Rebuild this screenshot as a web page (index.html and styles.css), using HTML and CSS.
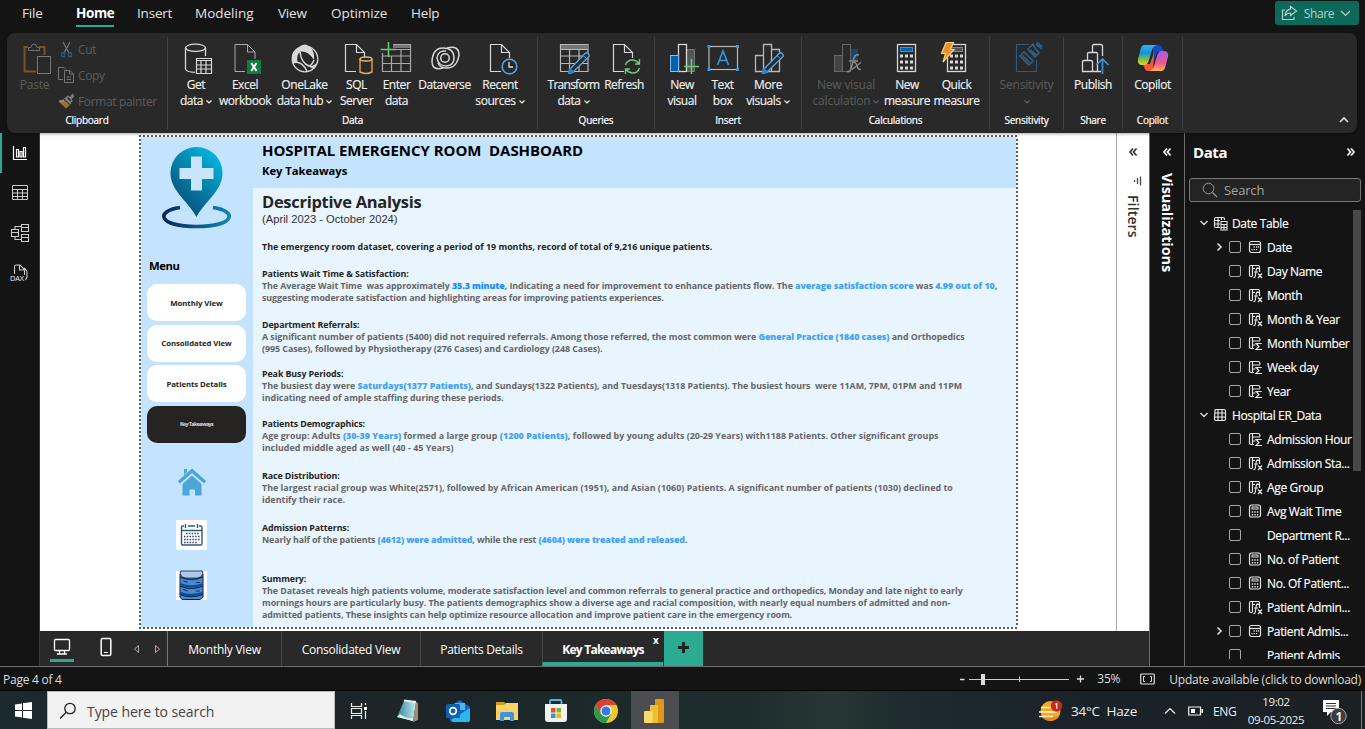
FILE: index.html
```html
<!DOCTYPE html>
<html lang="en">
<head>
<meta charset="utf-8">
<title>Hospital Emergency Room Dashboard</title>
<link rel="stylesheet" href="styles.css">
</head>
<body>
<svg class="defs" width="0" height="0">
  <symbol id="page" viewBox="0 0 32 32"><path d="M16 29.500H5.500V2.500H16.500L24.500 10.500V16M16.500 2.500V10.500H24.500" fill="none" stroke="#d8d8d8" stroke-width="1.200"/></symbol>
  <symbol id="pencil" viewBox="0 0 32 32"><path d="M27 11.500Q29 10 30.500 12T30.500 15L15 30L10.500 32L12 27Z" fill="#292929" stroke="#5aa7e0" stroke-width="1.400"/><path d="M12 27.500L15 30L11 31.500Z" fill="#0f6cbd" stroke="#2f86d1" stroke-width="2"/><path d="M25 13.500l3.500 3" stroke="#5aa7e0"/></symbol>
  <symbol id="chev" viewBox="0 0 6 4"><path d="M.500 .500L3 3L5.500 .500" fill="none" stroke="currentColor" stroke-width="1.200"/></symbol>
  <symbol id="down" viewBox="0 0 10 10"><path d="M1.500 3L5 6.500L8.500 3" fill="none" stroke="#ddd" stroke-width="1.400"/></symbol>
  <symbol id="right" viewBox="0 0 10 10"><path d="M3.500 1.500L7 5L3.500 8.500" fill="none" stroke="#ddd" stroke-width="1.600"/></symbol>
  <symbol id="dbl" viewBox="0 0 10 10"><path d="M5 1.500L2 5L5 8.500M8.500 1.500L5.500 5L8.500 8.500" fill="none" stroke="currentColor" stroke-width="1.700"/></symbol>
  <symbol id="grid" viewBox="0 0 15 15"><path d="M2 2.500Q2 1.500 3 1.500H11Q12.500 1.500 12.500 3V11Q12.500 12.500 11 12.500H3Q1.500 12.500 1.500 11ZM5 1.500V12.500M9 1.500V12.500M1.500 5H12.500M1.500 9H12.500" fill="none" stroke="#e6e6e6" stroke-width="1.200"/></symbol>
  <symbol id="gridcalc" viewBox="0 0 15 15"><path d="M7 11.500H3Q1.500 11.500 1.500 10V3Q1.500 1.500 3 1.500H10Q11.500 1.500 11.500 3V4M5 1.500V11.500M8.500 1.500V4M1.500 4.500H7M1.500 8H7" fill="none" stroke="#e6e6e6" stroke-width="1.200"/><path d="M8 5.500H14V14H8ZM8 8.500H14M8 11.500H14M11 8.500V14" fill="none" stroke="#e6e6e6" stroke-width="1.100"/></symbol>
  <symbol id="cal" viewBox="0 0 15 15"><rect x="1.500" y="1.500" width="11" height="11" rx="2" fill="none" stroke="#e6e6e6" stroke-width="1.200"/><path d="M1.500 4.500H12.500" stroke="#e6e6e6" stroke-width="1.200"/><path d="M5.500 7h1.200M8 7h1.200M10 7h1M3.500 9.700h1.200M5.700 9.700h1.200M8 9.700h1.200" stroke="#e6e6e6" stroke-width="1.300"/></symbol>
  <symbol id="calc" viewBox="0 0 15 15"><rect x="1.500" y="1" width="11" height="12" rx="1.800" fill="none" stroke="#e6e6e6" stroke-width="1.200"/><rect x="4" y="3" width="6" height="2" fill="none" stroke="#e6e6e6"/><path d="M3.700 8H5.200M6.300 8H7.700M8.800 8H10.300M3.700 10.700H5.200M6.300 10.700H7.700M8.800 10.700H10.300" stroke="#e6e6e6" stroke-width="1.500"/></symbol>
  <symbol id="fx" viewBox="0 0 15 15"><path d="M4 12.500H3Q1.500 12.500 1.500 11V3Q1.500 1.500 3 1.500H10.500Q11.500 1.500 11.500 3V8M4.500 1.500V12.500M4.500 4.500H7M9 4.500H11.500" fill="none" stroke="#e6e6e6" stroke-width="1.200"/><path d="M10.500 4Q8.500 3.500 8.200 6L7.300 12Q7 14 5.500 13.500M6.200 8H10M10 9.500L14 14M14 9.500L10 14" fill="none" stroke="#e6e6e6" stroke-width="1.200"/></symbol>
  <symbol id="sum" viewBox="0 0 15 15"><path d="M6 12.500H3Q1.500 12.500 1.500 11V3Q1.500 1.500 3 1.500H10Q12 1.500 12 4.500M4.500 1.500V12.500M4.500 5H12M4.500 9H7.500" fill="none" stroke="#e6e6e6" stroke-width="1.200"/><path d="M13.700 7.500H8L11 10.500L8 13.500H14" fill="none" stroke="#e6e6e6" stroke-width="1.200"/></symbol>
</svg>

<nav class="menubar">
  <span class="m-file">File</span><span class="m-home">Home</span><span class="m-insert">Insert</span><span class="m-model">Modeling</span><span class="m-view">View</span><span class="m-opt">Optimize</span><span>Help</span>
  <button class="share"><svg width="17" height="17" viewBox="0 0 17 17"><path d="M4 5H1.500V14.500H13V12M9.500 1.500L15.500 6L9.500 10.500V8Q6 8 4 11Q4.500 5 9.500 4.200Z" fill="none" stroke="#b5cfc9" stroke-width="1.200"/></svg><span>Share</span><svg width="11" height="7" viewBox="0 0 11 7"><path d="M1 1L5.500 5.500L10 1" fill="none" stroke="#b5cfc9" stroke-width="1.200"/></svg></button>
</nav>

<section class="ribbon">
  <div class="group g-clip">
    <div class="buttons">
      <div class="btn b-paste off"><svg width="32" height="32" viewBox="0 0 32 32"><path d="M9 5H5.500V29.500H17M20 5H25.500V13" fill="none" stroke="#755426" stroke-width="2"/><path d="M9.500 8.500V5.500H12Q12.500 2 15 2T18 5.500H20.500V8.500Z" fill="#292929" stroke="#6f6f6f"/><rect x="18.500" y="14.500" width="13" height="17" fill="#292929" stroke="#777"/></svg><span>Paste</span></div>
      <div class="cliplist off">
        <div><svg width="17" height="17" viewBox="0 0 17 17"><path d="M5 1L11 12M12 1L6 12" stroke="#777" stroke-width="1.300"/><rect x="3.500" y="12" width="3" height="3.500" fill="none" stroke="#285a7a" stroke-width="1.400"/><rect x="10.500" y="12" width="3" height="3.500" fill="none" stroke="#285a7a" stroke-width="1.400"/></svg><span>Cut</span></div>
        <div><svg width="17" height="17" viewBox="0 0 17 17"><path d="M5 12.500H.500V.500H6L8 2.500M6.500 3.500H12L15.500 7V15.500H6.500ZM11.500 3.500V7H15.500M8.500 10H13M8.500 12.500H13" fill="none" stroke="#757575"/></svg><span>Copy</span></div>
        <div><svg width="17" height="17" viewBox="0 0 17 17"><path d="M5 6L12 12L8 15.500L1 9Z" fill="#9a7038"/><path d="M6.500 5L13 11M8 5L10 3L12 5L14.500 1.500L15.500 3L13 6L14 8L12 9.500Z" fill="#292929" stroke="#888" stroke-width="1.200"/><path d="M1 8L6 8" stroke="#aaa"/></svg><span>Format painter</span></div>
      </div>
    </div>
    <div class="label">Clipboard</div>
  </div>
  <div class="group g-data">
    <div class="buttons">
      <div class="btn b1"><svg width="32" height="32" viewBox="0 0 32 32"><path d="M5.500 6V27Q6 30 15 30.300M25.500 6V14" fill="none" stroke="#d8d8d8" stroke-width="1.300"/><ellipse cx="15.500" cy="5.800" rx="10" ry="3.600" fill="none" stroke="#d8d8d8" stroke-width="1.300"/><path d="M16.500 16.500H31.500V31.500H16.500ZM16.500 18.500H31.500M16.500 23H31.500M16.500 27H31.500M21 18V31.500M26 18V31.500" fill="#292929" stroke="#d8d8d8" stroke-width="1.200"/></svg><span>Get</span><span>data<svg class="cv"><use href="#chev"/></svg></span></div>
      <div class="btn b2"><svg width="32" height="32" viewBox="0 0 32 32"><path d="M16 29.500H6V2.500H18.500L26 10V17M18.500 2.500V10H26" fill="none" stroke="#a8a8a8"/><rect x="18" y="18" width="14" height="14" fill="#107c41"/><path d="M22.300 21L27.500 29M27.500 21L22.300 29" stroke="#fff" stroke-width="2"/></svg><span>Excel</span><span>workbook</span></div>
      <div class="btn b3"><svg width="32" height="32" viewBox="0 0 32 32"><circle cx="16" cy="17" r="12.800" fill="none" stroke="#d8d8d8" stroke-width="1.300"/><path d="M10 5.500Q15 0 20.500 4.500Q26 9 25 18Q20 9 11.500 9.500Q7 13 8.500 21L4 21Q1 12 7 7Z" fill="#d8d8d8"/><path d="M11 9.500Q12 21 20 24Q23 23 25 18M4 21Q12 18 18 29" fill="none" stroke="#d8d8d8" stroke-width="1.500"/><path d="M20 24Q26 24 28 20L26 26Q22 27 20 24Z" fill="#d8d8d8"/></svg><span>OneLake</span><span>data hub<svg class="cv"><use href="#chev"/></svg></span></div>
      <div class="btn b4"><svg width="32" height="32" viewBox="0 0 32 32"><use href="#page" x="-1"/><path d="M19 17V30Q25 33 31 30V17" fill="#292929" stroke="#e0a458" stroke-width="1.400"/><ellipse cx="25" cy="17" rx="6" ry="2" fill="#292929" stroke="#e9b878" stroke-width="1.400"/></svg><span>SQL</span><span>Server</span></div>
      <div class="btn b5"><svg width="32" height="32" viewBox="0 0 32 32"><path d="M1.500 11V29.500H29.500V2.500H12M1.500 14H29.500M1.500 21.500H29.500M10.500 14V29.500M20 7V29.500M12 7.500H29.500" fill="none" stroke="#a8a8a8" stroke-width="1.200"/><path d="M12 4.500H29" stroke="#777" stroke-width="3"/><path d="M7.500 0V15M-.500 7.500H15" stroke="#6ccb79" stroke-width="1.500"/></svg><span>Enter</span><span>data</span></div>
      <div class="btn b6"><svg width="32" height="32" viewBox="0 0 32 32"><g fill="none" stroke="#d8d8d8" stroke-width="1.500"><circle cx="16" cy="16" r="4.300"/><path d="M14 26Q3 29 3 19Q4 6 14 6Q25 6 25 16Q25 23 18 24Q9 24 8 16Q9 8 17 9"/><path d="M18 6Q30 3 30 13Q28 26 18 26Q11 26 9 21"/></g></svg><span>Dataverse</span></div>
      <div class="btn b7"><svg width="32" height="32" viewBox="0 0 32 32"><use href="#page" x="1"/><circle cx="25.500" cy="24.500" r="7.300" fill="#292929" stroke="#5aa7e0" stroke-width="1.500"/><path d="M25 20V25H29" fill="none" stroke="#ddd" stroke-width="1.300"/></svg><span>Recent</span><span>sources<svg class="cv"><use href="#chev"/></svg></span></div>
    </div>
    <div class="label">Data</div>
  </div>
  <div class="group g-query">
    <div class="buttons">
      <div class="btn b8"><svg width="32" height="32" viewBox="0 0 32 32"><path d="M2.500 2.500H30V29.500H2.500ZM2.500 14H30M2.500 21.500H30M11.500 7V29.500M21 7V29.500M2.500 7.500H30" fill="none" stroke="#b8b8b8" stroke-width="1.200"/><path d="M3 5H29.500" stroke="#777" stroke-width="4"/><use href="#pencil"/></svg><span class="tight">Transform</span><span>data<svg class="cv"><use href="#chev"/></svg></span></div>
      <div class="btn b9"><svg width="32" height="32" viewBox="0 0 32 32"><use href="#page"/><circle cx="24.500" cy="24.500" r="8" fill="#292929"/><path d="M17.500 23Q19 18 24.500 18Q28 18 31 21.500M31.500 17V22H27M31.500 26Q30 31 24.500 31Q21 31 18 27.500M17.500 32V27H22" fill="none" stroke="#6ccb79" stroke-width="1.400"/></svg><span>Refresh</span></div>
    </div>
    <div class="label">Queries</div>
  </div>
  <div class="group g-insert">
    <div class="buttons">
      <div class="btn b10"><svg width="32" height="32" viewBox="0 0 32 32"><rect x="20.500" y="7.500" width="8" height="22" fill="#555" stroke="#777"/><rect x="12.500" y="2.500" width="8" height="27" fill="#292929" stroke="#d8d8d8" stroke-width="1.300"/><rect x="4.500" y="13.500" width="8" height="16" fill="#0063b1" stroke="#83beec"/><path d="M25.500 17V32M18 24.500H33" stroke="#6ccb79" stroke-width="1.500"/></svg><span>New</span><span>visual</span></div>
      <div class="btn b11"><svg width="32" height="32" viewBox="0 0 32 32"><rect x="2" y="4.500" width="28.500" height="23" fill="none" stroke="#b8b8b8" stroke-width="1.200"/><path d="M.500 3H3.500V6H.500ZM29 3H32V6H29ZM.500 26H3.500V29H.500ZM29 26H32V29H29Z" fill="#3a96dd"/><path d="M10.500 23L16 9L21.500 23M12.500 18.500H19.500" fill="none" stroke="#3a96dd" stroke-width="1.600"/></svg><span>Text</span><span>box</span></div>
      <div class="btn b12"><svg width="32" height="32" viewBox="0 0 32 32"><path d="M3.500 13.500H11.500V29.500H3.500ZM11.500 2.500H19.500V29.500H11.500ZM19.500 7.500H27.500V29.500H19.500Z" fill="none" stroke="#b8b8b8" stroke-width="1.300"/><use href="#pencil"/></svg><span>More</span><span>visuals<svg class="cv"><use href="#chev"/></svg></span></div>
    </div>
    <div class="label">Insert</div>
  </div>
  <div class="group g-calc">
    <div class="buttons">
      <div class="btn b13 off"><svg width="32" height="32" viewBox="0 0 32 32"><rect x="20" y="7" width="8" height="12" fill="#1d4365"/><rect x="12.500" y="2.500" width="8" height="27" fill="#292929" stroke="#666"/><rect x="4.500" y="13.500" width="8" height="16" fill="#444" stroke="#666"/><path d="M29 13Q25 12 24 16L21 27Q20 30 17 29.500M19 19H28" fill="none" stroke="#888" stroke-width="1.600"/><path d="M23.500 20.500Q26 20 27 24T31 27.500M31 20.500L22 27.500" fill="none" stroke="#888" stroke-width="1.300"/></svg><span>New visual</span><span>calculation<svg class="cv"><use href="#chev"/></svg></span></div>
      <div class="btn b14"><svg width="32" height="32" viewBox="0 0 32 32"><rect x="6.500" y="2.500" width="18" height="27" fill="none" stroke="#d8d8d8" stroke-width="1.300"/><rect x="9.500" y="5.500" width="12" height="4" fill="#0063b1" stroke="#3a96dd"/><path d="M9 14H22M9 20H22M9 26H22" stroke="#d8d8d8" stroke-width="3" stroke-dasharray="3 2"/></svg><span>New</span><span>measure</span></div>
      <div class="btn b15"><svg width="32" height="32" viewBox="0 0 32 32"><rect x="6.500" y="2.500" width="18" height="27" fill="none" stroke="#d8d8d8" stroke-width="1.300"/><rect x="9.500" y="5.500" width="12" height="4" fill="#555" stroke="#888"/><path d="M9 14H22M9 20H22M9 26H22" stroke="#d8d8d8" stroke-width="3" stroke-dasharray="3 2"/><path d="M5 .500H12.500L9.500 7.500H13L2 20L4.500 11.500H.500Z" fill="#e8912d" stroke="#fbd17c" stroke-width="1.200"/></svg><span>Quick</span><span>measure</span></div>
    </div>
    <div class="label">Calculations</div>
  </div>
  <div class="group g-sens">
    <div class="buttons">
      <div class="btn b16 off"><svg width="32" height="32" viewBox="0 0 32 32"><path d="M18 2.500H5.500V29.500H25.500V18" fill="none" stroke="#295b80" stroke-width="1.200"/><path d="M9 14L13 10L22 19L18 23ZM11.500 13.500L18.500 20.500M17 7L22 2L24 6L28 11L24 15ZM19 8L25 13M25 2L31 7M26 0L31 5" fill="none" stroke="#315f82" stroke-width="1.700"/></svg><span>Sensitivity</span><span><svg class="cv solo"><use href="#chev"/></svg></span></div>
    </div>
    <div class="label">Sensitivity</div>
  </div>
  <div class="group g-share">
    <div class="buttons">
      <div class="btn b17"><svg width="32" height="32" viewBox="0 0 32 32"><path d="M5.500 29.500V20Q5.500 18.500 7 18.500H14Q15.500 18.500 15.500 20V29.500M10.500 18V11.500Q10.500 10.500 12 10.500H19Q20.500 10.500 20.500 12V29.500M15.500 10V4Q15.500 2.500 17 2.500H24Q25.500 2.500 25.500 4V14M5 29.500H24" fill="none" stroke="#d8d8d8" stroke-width="1.300"/><path d="M25.500 32V17M19.500 23L25.500 17L31.500 23" fill="none" stroke="#3a96dd" stroke-width="1.600"/></svg><span>Publish</span></div>
    </div>
    <div class="label">Share</div>
  </div>
  <div class="group g-copilot">
    <div class="buttons">
      <div class="btn b18"><svg width="32" height="32" viewBox="0 0 32 32"><defs><linearGradient id="c1" x1="0" y1="0" x2="0" y2="1"><stop offset="0" stop-color="#2fb5f4"/><stop offset=".4" stop-color="#1a93dd"/><stop offset=".7" stop-color="#6fbf50"/><stop offset="1" stop-color="#f3cf12"/></linearGradient><linearGradient id="c2" x1="0" y1="0" x2="0" y2="1"><stop offset="0" stop-color="#a35cf0"/><stop offset=".6" stop-color="#f0588e"/><stop offset="1" stop-color="#ffb04f"/></linearGradient></defs><path d="M16 3H21Q24 3 25 6L26.500 10H20L16 22Z" fill="#1749c9"/><path d="M16 29H11Q8 29 7.500 26L6 22H13L17 10Z" fill="#f05a3a"/><path d="M7 3H20Q16 4 15 8L12 18Q11 22 8 23H4Q0 22 1 17L4 6Q5 3 7 3Z" fill="url(#c1)"/><path d="M25 29H12Q16 28 17 24L20 14Q21 10 24 9H28Q32 10 31 15L28 26Q27 29 25 29Z" fill="url(#c2)"/></svg><span>Copilot</span></div>
    </div>
    <div class="label">Copilot</div>
  </div>
  <svg class="collapse" width="10" height="6" viewBox="0 0 10 6"><path d="M1 5L5 1L9 5" fill="none" stroke="#ddd" stroke-width="1.600"/></svg>
</section>

<main class="work">
  <aside class="rail">
    <div class="active"><svg width="20" height="20" viewBox="0 0 20 20"><path d="M3.500 3V16.500H17M6.500 14V6.500H8.500V14ZM10 14V8.500H12V14ZM13.500 14V4.500H15.500V14Z" fill="none" stroke="#fff" stroke-width="1.200"/></svg></div>
    <div><svg width="20" height="20" viewBox="0 0 20 20"><path d="M2.500 2.500H17.500V16.500H2.500ZM2.500 6.500H17.500M2.500 10H17.500M2.500 13.500H17.500M7.500 6.500V16.500M12.500 6.500V16.500" fill="none" stroke="#ccc"/></svg></div>
    <div><svg width="20" height="20" viewBox="0 0 20 20"><path d="M1.500 6.500H8.500V13.500H1.500ZM1.500 9.500H8.500M11.500 1.500H18.500V8.500H11.500ZM11.500 4.500H18.500M11.500 11.500H18.500V18.500H11.500ZM11.500 14.500H18.500M5 6V3.500H11M5 14V16.500H11" fill="none" stroke="#ccc" stroke-width="1.100"/></svg></div>
    <div><svg width="20" height="20" viewBox="0 0 20 20"><path d="M4.500 11V4Q4.500 2 6 2H10L14.500 6.500V12M9.500 2V7H14.500M14 5Q17 7 17 10V14L15.500 17" fill="none" stroke="#ccc" stroke-width="1.100"/><text x="0" y="18" class="dax">DAX</text></svg></div>
  </aside>

  <div class="center">
    <div class="stage">
      <div class="canvas">
        <div class="report">
          <div class="side">
            <svg class="logo" width="72" height="84" viewBox="0 0 72 84"><defs><linearGradient id="pin" x1=".9" y1="0" x2=".2" y2="1"><stop offset="0" stop-color="#00c0e8"/><stop offset=".5" stop-color="#087fa7"/><stop offset="1" stop-color="#064573"/></linearGradient><linearGradient id="ring"><stop offset="0" stop-color="#07265c"/><stop offset="1" stop-color="#1385ae"/></linearGradient></defs><path d="M35.500 71C27 55 9.500 45 9.500 27A26 26 0 0 1 61.500 27C61.500 45 44 55 35.500 71Z" fill="url(#pin)"/><path d="M30 10.500H41V22H52.500V33H41V44.500H30V33H18.500V22H30Z" fill="#c9e5fb"/><path d="M19 61.500C-6 65 -3 80.500 35.500 80.500C74 80.500 77 65 52 61.500" fill="none" stroke="url(#ring)" stroke-width="3.600"/></svg>
            <h3>Menu</h3>
            <div class="pill">Monthly View</div>
            <div class="pill">Consolidated View</div>
            <div class="pill">Patients Details</div>
            <div class="pill dark">Key Takeaways</div>
            <svg class="home" width="28" height="28" viewBox="0 0 28 28"><path d="M6 1H9V4L6 7ZM0 13L14 .500L28 13L26 15.500L14 5L2 15.500Z" fill="#4aa5d8"/><path d="M14 7.500L23.500 16V27.500H17V21.500H11.500V27.500H4.500V16Z" fill="#4aa5d8"/></svg>
            <svg class="calimg" width="31" height="30" viewBox="0 0 31 30"><rect width="31" height="30" fill="#fff"/><path d="M8 6H6.500Q5.500 6 5.500 7.500V23.500Q5.500 25 7 25H24.500Q26 25 26 23.500V7.500Q26 6 24.500 6H23M12 6H19M5.500 10.500H26M9.500 4V8M21.500 4V8" fill="none" stroke="#2c5b78" stroke-width="1.400"/><path d="M10 13.500H24M8 16.500H24M8 19.500H24M8 22.500H21" stroke="#33475c" stroke-width="1.400" stroke-dasharray="1.500 1.300"/></svg>
            <svg class="dbimg" width="31" height="29" viewBox="0 0 31 29"><rect width="31" height="29" fill="#fff"/><path d="M4 3H27V26L24 28.500H6L4 26Z" fill="#4a88d4" stroke="#1a222c"/><path d="M4.500 0H26.500Q28 5 22 7H9Q3 5 4.500 0Z" fill="#b0c8ee" stroke="#1a222c" stroke-width=".8"/><path d="M4 13Q15 18 27 13M4 22Q15 26 27 22" fill="none" stroke="#0c5099" stroke-width="2.400"/><path d="M4 6Q15 11 27 6M4 15Q15 20 27 15M4 23.500Q15 28 27 23.500" fill="none" stroke="#11263d" stroke-width="1.100"/><path d="M7 10l5 1.200M7 18.500l5 1.500M20 11.500h4M20 20h4" stroke="#173050"/></svg>
          </div>
          <div class="content">
            <header><h1>HOSPITAL EMERGENCY ROOM&nbsp; DASHBOARD</h1><h2>Key Takeaways</h2></header>
            <div class="body">
              <div class="title">Descriptive Analysis</div>
              <div class="range">(April 2023 - October 2024)</div>
              <p class="lead">The emergency room dataset, covering a period of 19 months, record of total of 9,216 unique patients.</p>
              <article class="s1"><h4>Patients Wait Time &amp; Satisfaction:</h4><p>The Average Wait Time&nbsp; was approximately <b class="strong">35.3 minute</b>, Indicating a need for improvement to enhance patients flow. The <b>average satisfaction score</b> was <b>4.99 out of 10</b>,<br>suggesting moderate satisfaction and highlighting areas for improving patients experiences.</p></article>
              <article class="s2"><h4>Department Referrals:</h4><p>A significant number of patients (5400) did not required referrals. Among those referred, the most common were <b>General Practice (1840 cases)</b> and Orthopedics<br>(995 Cases), followed by Physiotherapy (276 Cases) and Cardiology (248 Cases).</p></article>
              <article class="s3"><h4>Peak Busy Periods:</h4><p>The busiest day were <b>Saturdays(1377 Patients)</b>, and Sundays(1322 Patients), and Tuesdays(1318 Patients). The busiest hours&nbsp; were 11AM, 7PM, 01PM and 11PM<br>indicating need of ample staffing during these periods.</p></article>
              <article class="s4"><h4>Patients Demographics:</h4><p>Age group: Adults <b>(30-39 Years)</b> formed a large group <b>(1200 Patients)</b>, followed by young adults (20-29 Years) with1188 Patients. Other significant groups<br>included middle aged as well (40 - 45 Years)</p></article>
              <article class="s5"><h4>Race Distribution:</h4><p>The largest racial group was White(2571), followed by African American (1951), and Asian (1060) Patients. A significant number of patients (1030) declined to<br>identify their race.</p></article>
              <article class="s6"><h4>Admission Patterns:</h4><p>Nearly half of the patients <b>(4612) were admitted</b>, while the rest <b>(4604) were treated and released</b>.</p></article>
              <article class="s7"><h4>Summery:</h4><p>The Dataset reveals high patients volume, moderate satisfaction level and common referrals to general practice and orthopedics, Monday and late night to early<br>mornings hours are particularly busy. The patients demographics show a diverse age and racial composition, with nearly equal numbers of admitted and non-<br>admitted patients, These insights can help optimize resource allocation and improve patient care in the emergency room.</p></article>
            </div>
          </div>
        </div>
      </div>
      <div class="filters"><svg class="d" width="10" height="10"><use href="#dbl"/></svg><svg class="fi" width="10" height="10" viewBox="0 0 10 10"><path d="M8.500 .500V9.500M5.500 2V8M2.500 4V6" stroke="#444" stroke-width="1.300"/></svg><span>Filters</span></div>
    </div>
    <div class="pages">
      <div class="desk"><svg width="20" height="18" viewBox="0 0 20 18"><path d="M3.500 1.500H16.500Q17.500 1.500 17.500 2.500V11.500Q17.500 12.500 16.500 12.500H3.500Q2.500 12.500 2.500 11.500V2.500Q2.500 1.500 3.500 1.500ZM7.500 13V16M12.500 13V16M5 16H15" fill="none" stroke="#fff" stroke-width="1.300"/></svg></div>
      <svg class="phone" width="12" height="20" viewBox="0 0 12 20"><rect x="1.200" y="1.500" width="9.600" height="17" rx="1.500" fill="none" stroke="#fff" stroke-width="1.500"/><path d="M4 15.500H8" stroke="#fff"/></svg>
      <svg class="arrows" width="28" height="10" viewBox="0 0 28 10"><path d="M5.500 1.500V8.500L1.500 5Z" fill="none" stroke="#aaa"/><path d="M22.500 1.500V8.500L26.500 5Z" fill="none" stroke="#c9a0a4"/></svg>
      <div class="tab t1">Monthly View</div><div class="tab t2">Consolidated View</div><div class="tab t3">Patients Details</div><div class="tab t4">Key Takeaways<i>x</i></div><div class="plus"></div>
    </div>
  </div>

  <aside class="viz"><svg width="10" height="10"><use href="#dbl"/></svg><span>Visualizations</span></aside>

  <aside class="data">
    <div class="datahead"><span>Data</span><svg width="10" height="10"><use href="#dbl"/></svg></div>
    <div class="search"><svg width="16" height="16" viewBox="0 0 16 16"><circle cx="6.500" cy="6.500" r="5.300" fill="none" stroke="#999"/><path d="M10.500 10.500L15 15" stroke="#999" stroke-width="1.200"/></svg><span>Search</span></div>
    <div class="treebox">
      <div class="tree">
        <div class="row tbl"><svg class="c"><use href="#down"/></svg><svg class="ic"><use href="#gridcalc"/></svg><span>Date Table</span></div>
        <div class="row"><svg class="c"><use href="#right"/></svg><i></i><svg class="ic"><use href="#cal"/></svg><span>Date</span></div>
        <div class="row"><em></em><i></i><svg class="ic"><use href="#fx"/></svg><span>Day Name</span></div>
        <div class="row"><em></em><i></i><svg class="ic"><use href="#fx"/></svg><span>Month</span></div>
        <div class="row"><em></em><i></i><svg class="ic"><use href="#fx"/></svg><span>Month &amp; Year</span></div>
        <div class="row"><em></em><i></i><svg class="ic"><use href="#sum"/></svg><span>Month Number</span></div>
        <div class="row"><em></em><i></i><svg class="ic"><use href="#sum"/></svg><span>Week day</span></div>
        <div class="row"><em></em><i></i><svg class="ic"><use href="#sum"/></svg><span>Year</span></div>
        <div class="row tbl"><svg class="c"><use href="#down"/></svg><svg class="ic"><use href="#grid"/></svg><span>Hospital ER_Data</span></div>
        <div class="row"><em></em><i></i><svg class="ic"><use href="#sum"/></svg><span>Admission Hour</span></div>
        <div class="row"><em></em><i></i><svg class="ic"><use href="#fx"/></svg><span>Admission Sta...</span></div>
        <div class="row"><em></em><i></i><svg class="ic"><use href="#fx"/></svg><span>Age Group</span></div>
        <div class="row"><em></em><i></i><svg class="ic"><use href="#calc"/></svg><span>Avg Wait Time</span></div>
        <div class="row"><em></em><i></i><svg class="ic"></svg><span>Department R...</span></div>
        <div class="row"><em></em><i></i><svg class="ic"><use href="#calc"/></svg><span>No. of Patient</span></div>
        <div class="row"><em></em><i></i><svg class="ic"><use href="#calc"/></svg><span>No. Of Patient...</span></div>
        <div class="row"><em></em><i></i><svg class="ic"><use href="#fx"/></svg><span>Patient Admin...</span></div>
        <div class="row"><svg class="c"><use href="#right"/></svg><i></i><svg class="ic"><use href="#cal"/></svg><span>Patient Admis...</span></div>
        <div class="row"><em></em><i></i><svg class="ic"></svg><span>Patient Admis</span></div>
      </div>
      <div class="thumb"></div>
    </div>
  </aside>
</main>

<footer class="status"><span class="pg">Page 4 of 4</span>
  <svg class="zoom" width="126" height="14" viewBox="0 0 126 14"><path d="M1 7.500H5.500M118 7H125M121.500 3.500V10.500" stroke="#ddd" stroke-width="1.300"/><path d="M10 7.500H110M60.500 4.500V10" stroke="#ccc"/><rect x="22" y="2" width="4" height="11" fill="#ddd"/></svg>
  <span class="pct">35%</span>
  <svg class="fit" width="15" height="12" viewBox="0 0 15 12"><rect x=".700" y="1" width="13.600" height="10" rx="1" fill="none" stroke="#ddd" stroke-width="1.200"/><path d="M5 3.500H3.500V8.500H5M10 3.500H11.500V8.500H10" fill="none" stroke="#ddd"/></svg>
  <span class="upd">Update available (click to download)</span>
</footer>

<footer class="taskbar">
  <div class="start"><svg width="17" height="17" viewBox="0 0 17 17"><path d="M0 2.500L7 1.500V8H0ZM8 1.300L17 0V8H8ZM0 9H7V15.500L0 14.500ZM8 9H17V17L8 15.700Z" fill="#fff"/></svg></div>
  <div class="find"><svg width="18" height="18" viewBox="0 0 18 18"><circle cx="11" cy="6.500" r="5.200" fill="none" stroke="#222" stroke-width="1.300"/><path d="M7 10.500L1 16.500" stroke="#222" stroke-width="1.400"/></svg><span>Type here to search</span></div>
  <div class="app"><svg width="18" height="16" viewBox="0 0 18 16"><path d="M1.500 0V3.500H11.500V0M1.500 16V12.500H11.500V16M1.500 5.500H11.500V10.500H1.500ZM15.500 0V2M15.500 8V16" fill="none" stroke="#eee" stroke-width="1.200"/><path d="M14 4h3v3h-3z" fill="#fff"/></svg></div>
  <div class="app"><svg width="24" height="24" viewBox="0 0 24 24"><defs><linearGradient id="np" x1="0" x2="1"><stop offset="0" stop-color="#2f8198"/><stop offset="1" stop-color="#c5eaf1"/></linearGradient></defs><path d="M20 3L22 4V21L17 23Z" fill="#a78d70"/><path d="M8 2L20 3L17 22L1 18Z" fill="url(#np)"/><path d="M8 1.500L20 3" stroke="#eee" stroke-width="2"/><path d="M1 18L4 15Q10 20 17 19V22Z" fill="#d5f2f4"/></svg></div>
  <div class="app"><svg width="24" height="24" viewBox="0 0 24 24"><path d="M4 7L14 1L24 8V21Q24 23 22 23H6Q4 23 4 21Z" fill="#1765b8"/><path d="M9 4H19V11H9Z" fill="#50b4ee"/><path d="M5 21L24 9V21Q24 23 22 23H7Z" fill="#28b8ed"/><rect y="5" width="14" height="14" rx="1.500" fill="#0f5fb2"/><circle cx="7" cy="12" r="3.300" fill="none" stroke="#fff" stroke-width="1.700"/></svg></div>
  <div class="app"><svg width="24" height="22" viewBox="0 0 24 22"><path d="M1 2H9L11 4V8H1Z" fill="#d99a14"/><path d="M1 5H9L11 3H23V20H1Z" fill="#fbd267"/><path d="M5 21V14Q5 12 7 12H17Q19 12 19 14V21H15V17H9V21Z" fill="#3d96dc"/></svg></div>
  <div class="app"><svg width="24" height="24" viewBox="0 0 24 24"><path d="M6 6V2Q6 1 7 1H16Q17.500 1 17.500 2V6" fill="none" stroke="#4ab6ea" stroke-width="1.800"/><path d="M1 5H23V20Q23 23 20 23H4Q1 23 1 20Z" fill="#f2f2f2"/><path d="M7 9h4.500v4.500H7z" fill="#e94e2c"/><path d="M12.500 9H17v4.500h-4.500z" fill="#7db92e"/><path d="M7 14.500h4.500V19H7z" fill="#20a1dd"/><path d="M12.500 14.500H17V19h-4.500z" fill="#f6b500"/></svg></div>
  <div class="app"><svg width="24" height="24" viewBox="0 0 24 24"><circle cx="12" cy="12" r="12" fill="#f4c52b"/><path d="M1.600 6A12 12 0 0 1 22.400 6H12L7 15Z" fill="#dc4032"/><path d="M1.600 6A12 12 0 0 0 12 24L17 15H7Z" fill="#2a9b4c"/><circle cx="12" cy="12" r="5.700" fill="#fff"/><circle cx="12" cy="12" r="4.500" fill="#327ce5"/></svg></div>
  <div class="app on"><svg width="20" height="24" viewBox="0 0 20 24"><path d="M11 0H19Q20 0 20 1V24H11Z" fill="#d99a17"/><path d="M6 6H13Q14 6 14 7V24H6Z" fill="#efbe36"/><path d="M1 12H7Q8.500 12 8.500 13V24H1Q0 24 0 23V13Q0 12 1 12Z" fill="#f9db6d"/></svg></div>
  <div class="tray">
    <svg class="sun" width="26" height="22" viewBox="0 0 26 22"><circle cx="12.500" cy="11" r="10" fill="#f7a823"/><path d="M4 17H21Q17 21 12 21T4 17Z" fill="#ea8717"/><path d="M3 7.500H14M1 12H19M1 16.500H15" stroke="#fff2d8" stroke-width="1.600"/><circle cx="18.500" cy="6" r="5.800" fill="#c42b1c"/><path d="M17.300 4.500L18.800 3.500V8.800" fill="none" stroke="#fff" stroke-width="1.100"/></svg>
    <span class="temp">34°C&nbsp; Haze</span>
    <svg class="up" width="12" height="8" viewBox="0 0 12 8"><path d="M1 6.500L6 1.500L11 6.500" fill="none" stroke="#eee" stroke-width="1.200"/></svg>
    <svg class="bat" width="15" height="10" viewBox="0 0 15 10"><path d="M.700 1H12.500V9H.700Z" fill="none" stroke="#eee" stroke-width="1.200"/><path d="M3 3H7V7H3ZM13.500 3H15V7H13.500Z" fill="#fff"/></svg>
    <span class="eng">ENG</span>
    <div class="clock"><span>19:02</span><span>09-05-2025</span></div>
    <svg class="note" width="26" height="26" viewBox="0 0 26 26"><path d="M1 1H17V13H9L5 17V13H1Z" fill="#fff"/><path d="M4 4.500H14M4 7H14M4 9.500H14" stroke="#333"/><circle cx="16.500" cy="17" r="7.700" fill="#3b3d3f" stroke="#a6a6a6"/><text x="13.500" y="21.500" class="nt">1</text></svg>
    <div class="peek"></div>
  </div>
</footer>
</body>
</html>
```

FILE: styles.css
```css
* { box-sizing: border-box; }
body { margin: 0; width: 1365px; height: 729px; overflow: hidden; background: #141414; color: #fff; font-family: "Open Sans", "Noto Sans", sans-serif; font-size: 12px; display: flex; flex-direction: column; white-space: nowrap; }
svg { display: block; flex: none; overflow: visible; }
.defs { position: absolute; }
h1, h2, h3, h4, p { margin: 0; }

/* menu */
.menubar { height: 33px; display: flex; align-items: flex-start; padding: 3px 6px 0 22px; font-size: 13.5px; line-height: 20px; letter-spacing: -.2px; color: #e2e2e2; }
.m-file { width: 54px; }
.m-home { width: 38px; margin-right: 23px; font-weight: 700; color: #fff; border-bottom: 2px solid #2aab92; height: 24px; letter-spacing: -.4px; }
.m-insert { width: 58px; }
.m-model { width: 83px; letter-spacing: 0; }
.m-view { width: 53px; }
.m-opt { width: 80px; letter-spacing: -.05px; }
.share { margin: -2px 0 0 auto; width: 84px; height: 24px; padding: 0 8px 0 6px; border: 0; border-radius: 3px; background: #0c695a; color: #b5cfc9; font: 12px "Open Sans", sans-serif; display: flex; align-items: center; justify-content: space-between; letter-spacing: -.4px; }

/* ribbon */
.ribbon { position: relative; z-index: 2; width: 1350px; height: 100px; margin-left: 7px; background: #292929; border-radius: 8px; display: flex; padding-top: 4px; flex: none; box-shadow: 0 1px 3px rgba(0,0,0,.35); }
.group { height: 92px; border-right: 1px solid #414141; display: flex; flex-direction: column; }
.buttons { height: 75px; display: flex; padding-top: 5px; }
.label { text-align: center; font-size: 10px; line-height: 17px; letter-spacing: -.25px; -webkit-text-stroke: .2px; }
.btn { display: flex; flex-direction: column; align-items: center; line-height: 16px; font-size: 12px; letter-spacing: -.45px; color: #f0f0f0; -webkit-text-stroke: .15px; }
.btn > svg { margin-bottom: 3px; }
.btn > span { display: flex; align-items: center; min-height: 16px; }
.btn > .tight { letter-spacing: -.75px; }
.off, .off .btn { color: #5c5c5c; }
.cv { width: 6px; height: 4px; margin: 1px 0 0 3px; }
.solo { margin: 1px 0 0; }
.g-clip { width: 161px; } .g-data { width: 370px; } .g-query { width: 117px; } .g-insert { width: 147px; }
.g-calc { width: 188px; } .g-sens { width: 74px; } .g-share { width: 59px; } .g-copilot { width: 60px; }
.b-paste { width: 51px; padding-left: 4px; }
.b-paste, .b13, .b16 { letter-spacing: -.2px; -webkit-text-stroke: 0; }
.cliplist { display: flex; flex-direction: column; gap: 9px; margin-top: -1px; }
.cliplist div { display: flex; gap: 3px; height: 17px; align-items: center; letter-spacing: -.35px; }
.b1 { width: 56px; } .b2 { width: 42px; } .b3 { width: 77px; } .b4 { width: 27px; } .b5 { width: 53px; } .b6 { width: 43px; } .b7 { width: 68px; }
.b8 { width: 71px; } .b9 { width: 30px; } .b10 { width: 54px; } .b11 { width: 27px; } .b12 { width: 64px; }
.b13 { width: 88px; } .b14 { width: 34px; } .b15 { width: 65px; } .b16 { width: 73px; } .b17 { width: 58px; } .b18 { width: 59px; }
.collapse { margin: 80px 8px 0 auto; }

/* work area */
.work { height: 534px; display: flex; border-bottom: 1px solid #6d6d6d; flex: none; }
.rail { width: 40px; border-right: 1px solid #3a3a3a; flex: none; }
.rail div { height: 40px; display: grid; place-items: center; }
.rail .active { border-left: 2px solid #2aab92; padding-right: 2px; }
.dax { font: 400 7.500px "Open Sans", sans-serif; fill: #eee; letter-spacing: -.2px; }
.center { width: 1109px; flex: none; }
.stage { height: 498px; background: #fff; display: flex; }
.canvas { width: 1076px; padding: 2px 0 0 99px; }
.report { width: 879px; height: 494px; padding: 2px; display: flex; color: #252423;
  background: repeating-linear-gradient(90deg, #5a5a5a 0 2px, #fff 2px 4px) 0 0 / 100% 2px no-repeat, repeating-linear-gradient(90deg, #5a5a5a 0 2px, #fff 2px 4px) 0 100% / 100% 2px no-repeat, repeating-linear-gradient(#5a5a5a 0 2px, #fff 2px 4px) 0 0 / 2px 100% no-repeat, repeating-linear-gradient(#5a5a5a 0 2px, #fff 2px 4px) 100% 0 / 2px 100% no-repeat; }
.side { width: 112px; background: #c3e3ff; display: flex; flex-direction: column; }
.logo { margin: 9px 0 0 20px; }
.side h3 { font-size: 11.300px; line-height: 16px; margin: 28px 0 10px 8px; color: #000; letter-spacing: -.4px; }
.pill { width: 99px; height: 37px; margin: 0 0 3.500px 6px; border-radius: 10px; background: #fff; display: grid; place-items: center; font-weight: 700; font-size: 7.800px; letter-spacing: -.08px; flex: none; }
.pill.dark { background: #252423; color: #ddd; font-size: 5.400px; letter-spacing: -.6px; }
.home { margin: 22px 0 0 37px; }
.calimg { margin: 24px 0 0 35px; }
.dbimg { margin: 21px 0 0 35px; }
.content { flex: 1; background: #e8f4fe; }
.content header { height: 51px; background: #c3e3ff; padding: 3px 0 0 9px; color: #000; }
h1 { font-size: 15px; line-height: 20px; letter-spacing: -.05px; }
h2 { font-size: 11.300px; line-height: 16px; margin-top: 3px; letter-spacing: -.05px; }
.body { padding: 4px 0 0 9px; }
.title { font-size: 16.500px; font-weight: 700; line-height: 20px; letter-spacing: -.3px; }
.range { font: 11.200px/14px "Liberation Sans", Arial, sans-serif; color: #333; }
.lead { font-size: 8.900px; line-height: 12px; margin-top: 15px; font-weight: 700; letter-spacing: -.01px; }
article { font-weight: 700; font-size: 8.900px; color: #666; line-height: 12.200px; }
h4 { font-size: 8.900px; line-height: 13px; color: #252423; letter-spacing: -.1px; }
b { color: #45a3f5; } .strong { color: #118dff; }
.s1 { height: 51px; margin-top: 14px; letter-spacing: -.075px; }
.s2 { height: 49px; letter-spacing: -.045px; }
.s3 { height: 50px; letter-spacing: -.01px; }
.s4 { height: 52px; letter-spacing: .03px; }
.s5 { height: 52px; letter-spacing: .025px; }
.s6 { height: 51px; letter-spacing: -.13px; }
.s7 { letter-spacing: -.07px; }
.filters { width: 33px; border-left: 1px solid #aaa; color: #333; display: flex; flex-direction: column; align-items: center; padding-top: 14px; }
.filters .fi { margin: 19px 0 9px 7px; }
.filters span { writing-mode: vertical-rl; font-size: 14px; font-weight: 600; line-height: 18px; letter-spacing: .15px; }
.pages { height: 35px; background: #292929; display: flex; align-items: stretch; }
.desk { width: 24px; margin-left: 10px; border-bottom: 3px solid #2aab92; height: 31px; padding: 7px 2px; }
.phone { margin: 6px 0 0 26px; }
.arrows { margin: 13px 6px 0 21px; }
.tab { border-left: 1px solid #484848; display: grid; place-items: center; padding-top: 2px; font-size: 12px; letter-spacing: -.25px; position: relative; }
.t1 { width: 114px; border-color: #777; } .t2 { width: 139px; } .t3 { width: 122px; }
.t4 { width: 121px; font-weight: 700; border-bottom: 4px solid #2aab92; padding-top: 6px; letter-spacing: -.75px; }
.t4 i { position: absolute; right: 5px; top: 2px; font: 700 10px/14px "Open Sans", sans-serif; }
.plus { width: 39px; margin-left: 1px; background: linear-gradient(#222,#222) 50% 47% / 11px 3px no-repeat, linear-gradient(#222,#222) 50% 46% / 3px 11px no-repeat, #2aab92; }
.viz { width: 36px; border: solid #6d6d6d; border-width: 0 1px; display: flex; flex-direction: column; align-items: center; padding-top: 14px; flex: none; }
.viz span { writing-mode: vertical-rl; margin-top: 16px; font-size: 14.500px; font-weight: 700; line-height: 18px; letter-spacing: -.1px; }
.data { flex: 1; padding: 7px 4px 8px 4px; }
.datahead { display: flex; align-items: center; justify-content: space-between; padding: 0 5px 0 4px; height: 24px; font-size: 15px; font-weight: 700; letter-spacing: -.4px; }
.datahead svg { transform: scaleX(-1); }
.search { height: 24px; margin-top: 14px; border: 1px solid #777; border-radius: 3px; background: #242424; display: flex; align-items: center; gap: 6px; padding-left: 12px; color: #a5a5a5; font-size: 13px; letter-spacing: -.15px; }
.treebox { height: 449px; margin-top: 8px; display: flex; overflow: hidden; }
.tree { width: 164px; padding-top: 1px; }
.row { height: 24px; display: flex; align-items: center; padding-left: 25px; font-size: 12px; letter-spacing: -.35px; -webkit-text-stroke: .15px; }
.row.tbl { padding-left: 10px; }
.row i { width: 12px; height: 12px; margin: 0 7px 0 5px; border: 1px solid #a5a5a5; border-radius: 2px; flex: none; }
.row em { width: 10px; flex: none; }
.c { width: 10px; height: 10px; }
.ic { width: 15px; height: 15px; margin-right: 4px; }
.tbl .ic { margin-left: 4px; }
.thumb { width: 8px; height: 261px; background: #484848; }

/* status */
.status { height: 24px; display: flex; align-items: center; border-bottom: 1px solid #000; color: #ddd; letter-spacing: -.25px; padding: 0 4px 0 3px; flex: none; }
.status span { padding-top: 2px; }
.zoom { margin-left: auto; }
.status .pct { width: 43px; margin-left: 12px; padding: 0; }
.fit { margin-right: 14px; }

/* taskbar */
.taskbar { height: 38px; display: flex; background: linear-gradient(90deg, #1b2a2f, #1c2528 30%, #1d2d2e 55%, #263735 61%, #1d2b2e 66%, #1a2229 80%, #1b2023); }
.start { width: 47px; display: grid; place-items: center; padding: 1px 0 0 0; }
.find { width: 288px; background: #f2f2f2; border: 1px solid #bbb; color: #444; display: flex; align-items: center; gap: 10px; padding: 2px 0 0 11px; font-size: 14px; letter-spacing: -.08px; }
.app { width: 49.300px; display: grid; place-items: center; padding: 1px 1px 0 0; }
.app.on { background: #4b4d50; width: 48px; }
.tray { flex: 1; display: flex; align-items: center; color: #eee; justify-content: flex-end; padding-top: 2px; }
.temp { font-size: 13.500px; width: 88px; margin-left: 7px; letter-spacing: -.2px; }
.up { margin-left: 5px; }
.bat { margin: 0 10px 0 12px; }
.eng { width: 28px; letter-spacing: -.4px; }
.clock { width: 70px; display: flex; flex-direction: column; align-items: center; line-height: 18px; font-size: 11.500px; letter-spacing: -.35px; margin-top: -1px; }
.note { margin: 2px 13px 0 11px; }
.nt { font: 700 12px "Open Sans", sans-serif; fill: #fff; }
.peek { width: 4px; height: 38px; margin-top: -2px; border-left: 1px solid #777; }
```
